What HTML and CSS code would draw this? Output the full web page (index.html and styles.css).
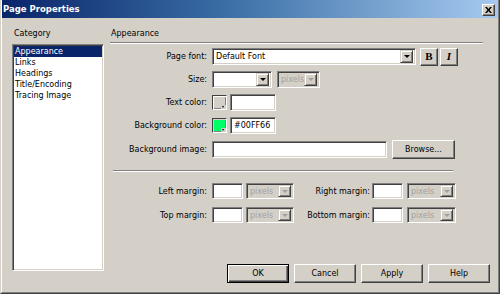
FILE: index.html
```html
<!DOCTYPE html>
<html>
<head>
<meta charset="utf-8">
<link rel="stylesheet" href="styles.css">
</head>
<body>
<div class="dialog">
  <div class="frame">
    <div class="titlebar">
      <span class="title">Page Properties</span>
      <span class="close"><svg width="7" height="6" viewBox="0 0 7 6"><path d="M0 0h2l1.5 2 1.5-2h2L4.5 3 7 6H5L3.5 4 2 6H0l2.5-3z" fill="#000"/></svg></span>
    </div>
    <div class="main">
      <div class="left">
        <div class="lbl">Category</div>
        <ul class="list">
          <li class="sel">Appearance</li>
          <li>Links</li>
          <li>Headings</li>
          <li>Title/Encoding</li>
          <li>Tracing Image</li>
        </ul>
      </div>
      <div class="right">
        <div class="heading">Appearance</div>
        <div class="form">
          <label class="flabel">Page font:</label>
          <div class="fctl">
            <div class="field select font-sel"><span class="val">Default Font</span><span class="arrow"><i></i></span></div>
            <span class="btn sq bold">B</span>
            <span class="btn sq ital">I</span>
          </div>

          <label class="flabel">Size:</label>
          <div class="fctl">
            <div class="field select size-sel"><span class="val"></span><span class="arrow"><i></i></span></div>
            <div class="field select units dis"><span class="val">pixels</span><span class="arrow"><i></i></span></div>
          </div>

          <label class="flabel">Text color:</label>
          <div class="fctl">
            <span class="swatch"><i></i></span>
            <div class="field color-in"></div>
          </div>

          <label class="flabel">Background color:</label>
          <div class="fctl">
            <span class="swatch green"><i></i></span>
            <div class="field color-in"><span class="val">#00FF66</span></div>
          </div>

          <label class="flabel">Background image:</label>
          <div class="fctl tall">
            <div class="field img-in"></div>
            <span class="btn browse">Browse...</span>
          </div>
        </div>
        <div class="sep"></div>
        <div class="margins">
          <div class="mrow">
            <label class="mlabel l1">Left margin:</label>
            <div class="field num"></div>
            <div class="field select mu dis"><span class="val">pixels</span><span class="arrow"><i></i></span></div>
            <label class="mlabel l2">Right margin:</label>
            <div class="field num n2"></div>
            <div class="field select mu mu2 dis"><span class="val">pixels</span><span class="arrow"><i></i></span></div>
          </div>
          <div class="mrow">
            <label class="mlabel l1">Top margin:</label>
            <div class="field num"></div>
            <div class="field select mu dis"><span class="val">pixels</span><span class="arrow"><i></i></span></div>
            <label class="mlabel l2">Bottom margin:</label>
            <div class="field num n2"></div>
            <div class="field select mu mu2 dis"><span class="val">pixels</span><span class="arrow"><i></i></span></div>
          </div>
        </div>
        <div class="buttons">
          <span class="btn push default">OK</span>
          <span class="btn push">Cancel</span>
          <span class="btn push">Apply</span>
          <span class="btn push">Help</span>
        </div>
      </div>
    </div>
  </div>
</div>
</body>
</html>
```

FILE: styles.css
```css
* { box-sizing: border-box; }
html, body { margin: 0; padding: 0; }
body {
  width: 500px;
  height: 294px;
  overflow: hidden;
  background: #d4d0c8;
  font-family: "DejaVu Sans", "Liberation Sans", sans-serif;
  font-size: 8px;
  color: #000;
}
.dialog {
  width: 500px;
  height: 294px;
  border-style: solid;
  border-width: 0 1px 1px 1px;
  border-color: #404040;
  border-left-color: #d4d0c8;
  background: #d4d0c8;
}
.frame {
  height: 100%;
  border-style: solid;
  border-width: 0 1px 1px 1px;
  border-color: #808080;
  border-left-color: #ffffff;
}
.titlebar {
  height: 18px;
  display: flex;
  align-items: center;
  justify-content: space-between;
  padding: 0 3px 0 1px;
  background: linear-gradient(to right, #0a246a 0%, #3a6ea5 45%, #a6caf0 100%);
}
.title {
  color: #fff;
  font-weight: bold;
  font-size: 8.5px;
  line-height: 11px;
}
.close {
  width: 13px;
  height: 12px;
  margin-top: 2px;
  background: #d4d0c8;
  border-top: 1px solid #fff;
  border-left: 1px solid #fff;
  border-right: 1px solid #404040;
  border-bottom: 1px solid #404040;
  box-shadow: inset -1px -1px #808080;
  display: flex;
  align-items: center;
  justify-content: center;
}
.close svg { display: block; }
.main {
  display: flex;
  padding: 10px 0 0 10px;
}
.left { width: 92px; }
.lbl { line-height: 11px; padding-left: 2px; }
.list {
  list-style: none;
  margin: 5px 0 0 0;
  padding: 0 1px;
  height: 227px;
  background: #fff;
  border-top: 1px solid #808080;
  border-left: 1px solid #808080;
  border-right: 1px solid #fff;
  border-bottom: 1px solid #fff;
  box-shadow: inset 1px 1px #404040, inset -1px -1px #d4d0c8;
  padding-top: 1px;
}
.list li {
  line-height: 11px;
  padding-left: 1px;
}
.list li.sel {
  background: #0a246a;
  color: #fff;
}
.right {
  width: 380px;
  margin-left: 6px;
}
.heading {
  width: 373px;
  height: 15px;
  line-height: 11px;
  padding-left: 1px;
  border-bottom: 1px solid #808080;
  box-shadow: 0 1px 0 #fff;
}
.form {
  margin-top: 5px;
  display: grid;
  grid-template-columns: 97px auto;
  column-gap: 5px;
  row-gap: 6px;
  align-items: center;
}
.flabel { text-align: right; line-height: 11px; }
.fctl { display: flex; align-items: center; height: 17px; }
.fctl.tall { height: 19px; }
.field {
  height: 17px;
  background: #fff;
  border-top: 1px solid #808080;
  border-left: 1px solid #808080;
  border-right: 1px solid #fff;
  border-bottom: 1px solid #fff;
  box-shadow: inset 1px 1px #404040, inset -1px -1px #d4d0c8;
  display: flex;
  align-items: center;
  padding: 0 2px 0 3px;
  line-height: 11px;
  white-space: nowrap;
  overflow: hidden;
}
.select { padding-right: 2px; }
.select .val { flex: 1; }
.arrow {
  width: 13px;
  height: 13px;
  background: #d4d0c8;
  border-top: 1px solid #d4d0c8;
  border-left: 1px solid #d4d0c8;
  border-right: 1px solid #404040;
  border-bottom: 1px solid #404040;
  box-shadow: inset 1px 1px #fff, inset -1px -1px #808080;
  display: flex;
  align-items: center;
  justify-content: center;
  flex: none;
}
.arrow i {
  width: 0;
  height: 0;
  border-left: 3px solid transparent;
  border-right: 3px solid transparent;
  border-top: 3px solid #000;
}
.dis { background: #d4d0c8; color: #a0a0a0; }
.dis .arrow i { border-top-color: #a0a0a0; }
.font-sel { width: 204px; }
.size-sel { width: 60px; }
.units { width: 43px; margin-left: 5px; }
.btn {
  background: #d4d0c8;
  border-top: 1px solid #fff;
  border-left: 1px solid #fff;
  border-right: 1px solid #404040;
  border-bottom: 1px solid #404040;
  box-shadow: inset -1px -1px #808080;
  display: flex;
  align-items: center;
  justify-content: center;
  line-height: 11px;
}
.sq {
  width: 18px;
  height: 18px;
  font-family: "Liberation Serif", "DejaVu Serif", serif;
  font-weight: bold;
  font-size: 11px;
}
.bold { margin-left: 4px; }
.ital { margin-left: 2px; font-style: italic; }
.swatch {
  position: relative;
  width: 15px;
  height: 15px;
  background: #d4d0c8;
  border-top: 1px solid #404040;
  border-left: 1px solid #404040;
  border-right: 1px solid #fff;
  border-bottom: 1px solid #fff;
  box-shadow: inset 1px 1px #fff, inset -1px -1px #808080;
}
.swatch.green { background: #00ff66; box-shadow: inset 1px 1px #d4d0c8, inset -1px -1px #808080; }
.swatch i {
  position: absolute;
  right: 0;
  bottom: 0;
  width: 5px;
  height: 4px;
  background: #d4d0c8;
}
.swatch i::after {
  content: "";
  position: absolute;
  left: 1px;
  top: 1px;
  border-left: 1.5px solid transparent;
  border-right: 1.5px solid transparent;
  border-top: 2px solid #000;
}
.color-in { width: 46px; margin-left: 3px; }
.img-in { width: 175px; }
.browse { width: 63px; height: 19px; margin-left: 5px; }
.sep {
  margin: 11px 0 0 3px;
  width: 340px;
  height: 2px;
  border-top: 1px solid #808080;
  border-bottom: 1px solid #fff;
}
.margins {
  margin-top: 11px;
  display: flex;
  flex-direction: column;
  gap: 8px;
}
.mrow { display: flex; align-items: center; height: 16px; }
.mrow .field { height: 16px; }
.mlabel { text-align: right; line-height: 11px; }
.l1 { width: 97px; }
.l2 { width: 76px; }
.num { width: 31px; margin-left: 5px; }
.n2 { margin-left: 2px; }
.mu { width: 48px; margin-left: 3px; }
.mu .arrow { height: 12px; }
.mu2 { width: 49px; margin-left: 4px; }
.buttons {
  margin-top: 41px;
  display: flex;
  justify-content: flex-end;
  gap: 5px;
}
.push { width: 62px; height: 19px; }
.default {
  border: 1px solid #000;
  box-shadow: inset 1px 1px #fff, inset -1px -1px #404040, inset -2px -2px #808080;
}
```
